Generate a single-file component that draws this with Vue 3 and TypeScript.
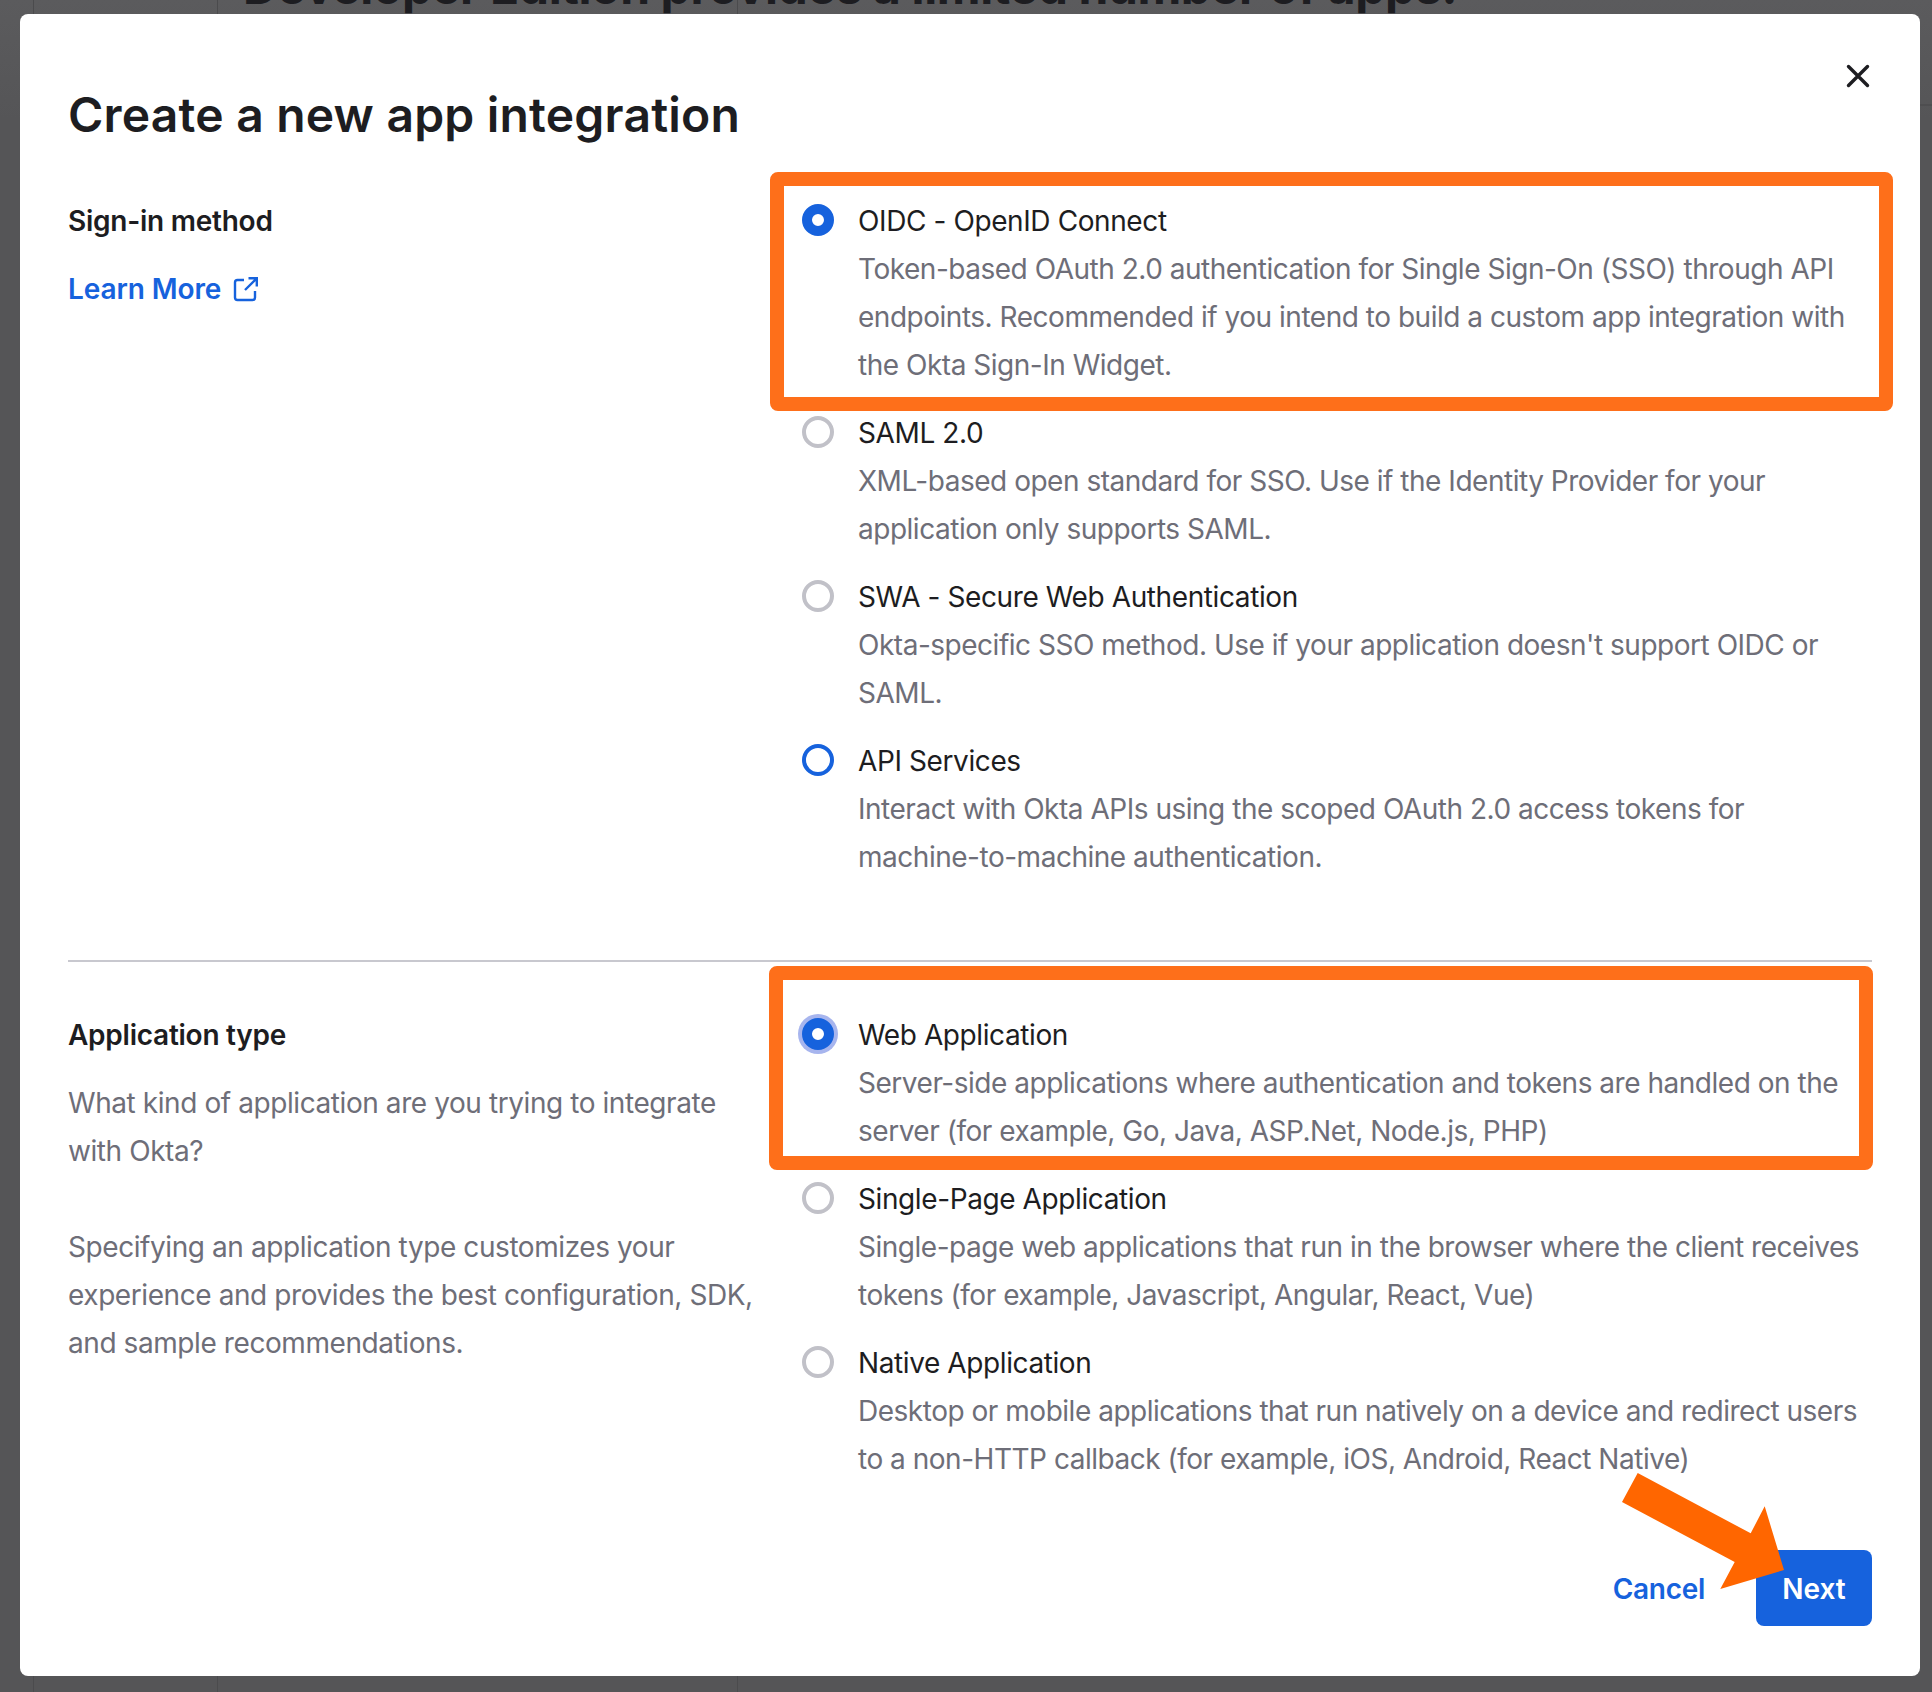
<script setup lang="ts">
interface Option {
  label: string
  lines: string[]
  state?: 'checked' | 'focused' | 'hover'
  mark?: 'first' | 'second'
}

const signIn: Option[] = [
  {
    label: 'OIDC - OpenID Connect',
    lines: [
      'Token-based OAuth 2.0 authentication for Single Sign-On (SSO) through API',
      'endpoints. Recommended if you intend to build a custom app integration with',
      'the Okta Sign-In Widget.',
    ],
    state: 'checked',
    mark: 'first',
  },
  {
    label: 'SAML 2.0',
    lines: [
      'XML-based open standard for SSO. Use if the Identity Provider for your',
      'application only supports SAML.',
    ],
  },
  {
    label: 'SWA - Secure Web Authentication',
    lines: [
      "Okta-specific SSO method. Use if your application doesn't support OIDC or",
      'SAML.',
    ],
  },
  {
    label: 'API Services',
    lines: [
      'Interact with Okta APIs using the scoped OAuth 2.0 access tokens for',
      'machine-to-machine authentication.',
    ],
    state: 'hover',
  },
]

const appType: Option[] = [
  {
    label: 'Web Application',
    lines: [
      'Server-side applications where authentication and tokens are handled on the',
      'server (for example, Go, Java, ASP.Net, Node.js, PHP)',
    ],
    state: 'focused',
    mark: 'second',
  },
  {
    label: 'Single-Page Application',
    lines: [
      'Single-page web applications that run in the browser where the client receives',
      'tokens (for example, Javascript, Angular, React, Vue)',
    ],
  },
  {
    label: 'Native Application',
    lines: [
      'Desktop or mobile applications that run natively on a device and redirect users',
      'to a non-HTTP callback (for example, iOS, Android, React Native)',
    ],
  },
]
</script>

<template>
  <div class="page">
    <div class="behind" aria-hidden="true">
      <p class="behind-title">Developer Edition provides a limited number of apps.</p>
      <span class="rule-v v1"></span>
      <span class="rule-v v2"></span>
      <span class="rule-v v3"></span>
      <span class="rule-h"></span>
    </div>

    <main class="modal">
      <button class="close" aria-label="Close">
        <svg width="24" height="24" viewBox="0 0 24 24">
          <path d="M2.500 2.500 21.500 21.500M21.500 2.500 2.500 21.500" stroke="#1d1d21" stroke-width="3.400" stroke-linecap="round" fill="none" />
        </svg>
      </button>

      <h1 class="title">Create a new app integration</h1>

      <section class="section first">
        <div class="side">
          <h2 class="side-title">Sign-in method</h2>
          <a class="learn">
            Learn More
            <svg width="26" height="26" viewBox="0 0 26 26" fill="none">
              <path d="M11 4H4.500A2.500 2.500 0 0 0 2 6.500V21.500A2.500 2.500 0 0 0 4.500 24H19.500A2.500 2.500 0 0 0 22 21.500V15" stroke="#1662dd" stroke-width="2.400" />
              <path d="M12 14 23 3M15.500 2.200H23.800V10.500" stroke="#1662dd" stroke-width="2.400" />
            </svg>
          </a>
        </div>
        <div class="options">
          <div v-for="o in signIn" :key="o.label" class="option">
            <span class="radio" :class="o.state"></span>
            <div class="option-text">
              <div class="label">{{ o.label }}</div>
              <div v-for="l in o.lines" :key="l" class="desc">{{ l }}</div>
            </div>
            <span v-if="o.mark" class="mark" :class="o.mark"></span>
          </div>
        </div>
      </section>

      <hr class="divider" />

      <section class="section second">
        <div class="side">
          <h2 class="side-title">Application type</h2>
          <p class="para">What kind of application are you trying to integrate<br />with Okta?</p>
          <p class="para">Specifying an application type customizes your<br />experience and provides the best configuration, SDK,<br />and sample recommendations.</p>
        </div>
        <div class="options">
          <div v-for="o in appType" :key="o.label" class="option">
            <span class="radio" :class="o.state"></span>
            <div class="option-text">
              <div class="label">{{ o.label }}</div>
              <div v-for="l in o.lines" :key="l" class="desc">{{ l }}</div>
            </div>
            <span v-if="o.mark" class="mark" :class="o.mark"></span>
          </div>
        </div>
      </section>

      <footer class="actions">
        <a class="cancel">Cancel</a>
        <button class="next">Next</button>
        <svg class="arrow" width="162" height="116" viewBox="0 0 162 116">
          <polygon points="15.700,0 0,29 112.700,89 98.300,116 162,97 142.700,33.300 128.700,60.300" fill="#ff6600" />
        </svg>
      </footer>
    </main>
  </div>
</template>

<style scoped>
.page {
  position: relative;
  width: 1932px;
  height: 1692px;
  padding: 14px 12px 16px 20px;
  box-sizing: border-box;
  overflow: hidden;
  background: linear-gradient(180deg, #5b5b5d 0, #555557 120px);
  font-family: Inter, "Noto Sans", sans-serif;
}
.behind {
  position: absolute;
  inset: 0;
}
.behind-title {
  position: absolute;
  left: 243px;
  top: -37px;
  margin: 0;
  white-space: nowrap;
  font-size: 48px;
  line-height: 48px;
  letter-spacing: -0.4px;
  font-weight: 700;
  color: #1d1d21;
}
.rule-v {
  position: absolute;
  top: 0;
  bottom: 0;
  width: 1px;
  background: #4b4b4d;
}
.v1 { left: 33px; }
.v2 { left: 217px; }
.v3 { left: 737px; }
.rule-h {
  position: absolute;
  left: 1920px;
  right: 0;
  top: 104px;
  height: 2px;
  background: #4e4e50;
}
.modal {
  position: relative;
  box-sizing: border-box;
  width: 1900px;
  height: 1662px;
  padding: 0 48px;
  background: #fff;
  border-radius: 8px;
  display: flex;
  flex-direction: column;
}
.close {
  position: absolute;
  top: 50px;
  right: 50px;
  padding: 0;
  border: 0;
  background: none;
  display: flex;
}
.title {
  margin: 68px 0 0;
  height: 66px;
  font-size: 48px;
  line-height: 66px;
  letter-spacing: 0.2px;
  font-weight: 600;
  color: #1d1d21;
}
.section {
  display: grid;
  grid-template-columns: 734px minmax(0, 1fr);
}
.section.first {
  margin-top: 48px;
}
.section.second {
  margin-top: 48px;
}
.side {
  padding-top: 1px;
}
.side-title {
  margin: 0;
  font-size: 28px;
  line-height: 48px;
  letter-spacing: -0.25px;
  font-weight: 600;
  color: #1d1d21;
}
.learn {
  display: flex;
  align-items: center;
  gap: 12px;
  margin-top: 20px;
  font-size: 28px;
  line-height: 48px;
  letter-spacing: -0.1px;
  font-weight: 600;
  color: #1662dd;
}
.para {
  margin: 20px 0 0;
  font-size: 28px;
  line-height: 48px;
  letter-spacing: -0.42px;
  color: #6e6e78;
  white-space: nowrap;
}
.para + .para {
  margin-top: 48px;
}
.options {
  display: flex;
  flex-direction: column;
  gap: 20px;
}
.option {
  position: relative;
  display: flex;
  gap: 24px;
}
.option-text {
  margin: 1px 0 -1px;
}
.radio {
  flex: none;
  box-sizing: border-box;
  width: 32px;
  height: 32px;
  margin: 8px 0 0;
  border: 4px solid #c1c1c8;
  border-radius: 50%;
  background: #fff;
}
.radio.hover {
  border-color: #1662dd;
}
.radio.checked,
.radio.focused {
  border: 10px solid #1662dd;
}
.radio.focused {
  box-shadow: 0 0 0 4px #a7b5ee;
}
.label {
  font-size: 28px;
  line-height: 48px;
  letter-spacing: -0.4px;
  color: #1d1d21;
}
.desc {
  font-size: 28px;
  line-height: 48px;
  letter-spacing: -0.48px;
  color: #6e6e78;
  white-space: nowrap;
}
.mark {
  position: absolute;
  box-sizing: border-box;
  border: 14px solid #fe6f1a;
  border-radius: 8px;
  pointer-events: none;
}
.mark.first {
  top: -24px;
  bottom: -23px;
  left: -32px;
  right: -21px;
}
.mark.second {
  top: -44px;
  bottom: -16px;
  left: -33px;
  right: -1px;
}
.divider {
  margin: 80px 0 0;
  border: 0;
  height: 2px;
  background: #c8c8cf;
}
.actions {
  position: relative;
  display: flex;
  justify-content: flex-end;
  align-items: center;
  gap: 51px;
  margin-top: 68px;
}
.cancel {
  margin-top: 2px;
  font-size: 28px;
  letter-spacing: -0.3px;
  font-weight: 600;
  color: #1662dd;
}
.next {
  width: 116px;
  height: 76px;
  padding: 2px 0 0;
  border: 0;
  border-radius: 8px;
  background: #1662dd;
  color: #fff;
  font: 600 28px Inter, "Noto Sans", sans-serif;
}
.arrow {
  position: absolute;
  right: 88px;
  top: -76.700px;
  overflow: visible;
}
</style>
